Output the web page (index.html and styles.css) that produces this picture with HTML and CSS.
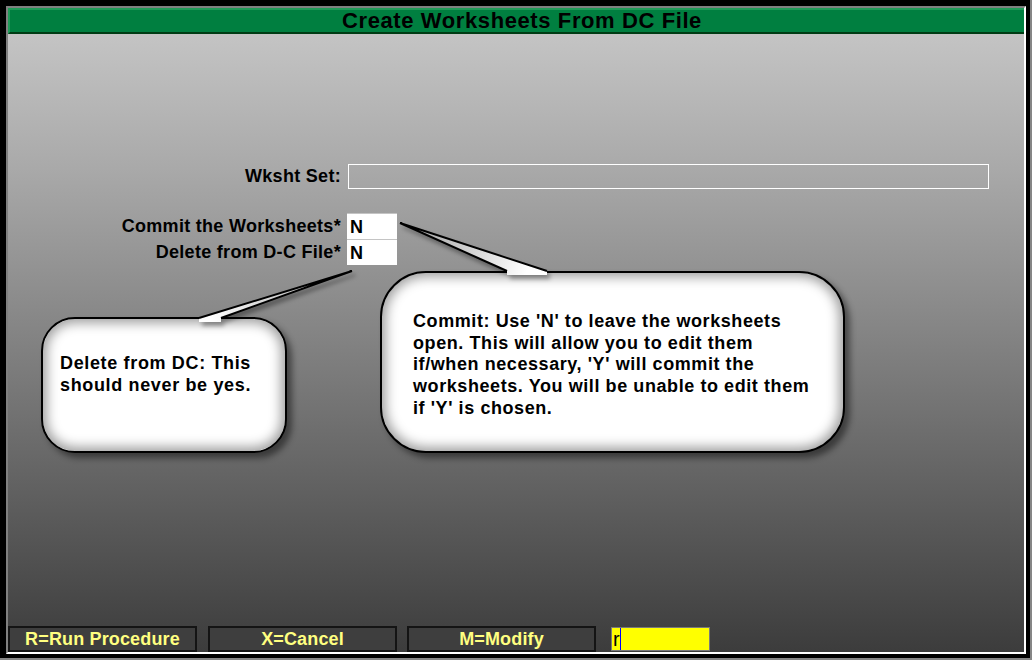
FILE: index.html
```html
<!DOCTYPE html>
<html>
<head>
<meta charset="utf-8">
<link rel="stylesheet" href="styles.css">
</head>
<body>
<div class="window">
  <div class="screen">
    <div class="titlebar">Create Worksheets From DC File</div>
    <div class="main">
      <div class="form">
        <div class="label">Wksht Set:</div>
        <div class="field-wide"></div>
        <div class="spacer"></div>
        <div class="label row1">Commit the Worksheets*</div>
        <div class="yn first">N</div>
        <div class="label">Delete from D-C File*</div>
        <div class="yn">N</div>
      </div>
    </div>
    <div class="buttonbar">
      <div class="btn">R=Run Procedure</div>
      <div class="btn">X=Cancel</div>
      <div class="btn">M=Modify</div>
      <div class="cmd"><span class="cmdtext">r</span><span class="caret"></span></div>
    </div>

    <div class="callout callout-dc">Delete from DC: This<br>should never be yes.</div>
    <div class="callout callout-commit">Commit: Use 'N' to leave the worksheets<br>open. This will allow you to edit them<br>if/when necessary, 'Y' will commit the<br>worksheets. You will be unable to edit them<br>if 'Y' is chosen.</div>

    <svg class="tails" width="1016" height="644" viewBox="0 0 1016 644">
      <defs>
        <filter id="tsh" x="-20%" y="-20%" width="140%" height="160%">
          <feDropShadow dx="3" dy="4" stdDeviation="2" flood-color="#000" flood-opacity="0.35"/>
        </filter>
        <linearGradient id="tg1" x1="344" y1="263" x2="202" y2="310" gradientUnits="userSpaceOnUse">
          <stop offset="0" stop-color="#9a9a9a"/>
          <stop offset="1" stop-color="#ffffff"/>
        </linearGradient>
        <linearGradient id="tg2" x1="392" y1="215" x2="519" y2="263" gradientUnits="userSpaceOnUse">
          <stop offset="0" stop-color="#9a9a9a"/>
          <stop offset="1" stop-color="#ffffff"/>
        </linearGradient>
      </defs>
      <g filter="url(#tsh)">
        <polygon points="344,263 191,310 191,314 213,314 213,310" fill="url(#tg1)"/>
        <polyline points="191,310 344,263 213,310" fill="none" stroke="#000" stroke-width="2" stroke-linejoin="miter"/>
      </g>
      <g filter="url(#tsh)">
        <polygon points="392,215 499,263 499,267 539,267 539,263" fill="url(#tg2)"/>
        <polyline points="499,263 392,215 539,263" fill="none" stroke="#000" stroke-width="2" stroke-linejoin="miter"/>
      </g>
    </svg>
  </div>
</div>
</body>
</html>
```

FILE: styles.css
```css
* { box-sizing: border-box; }

html, body {
  margin: 0;
  padding: 0;
}

body {
  background: #868686;
  width: 1032px;
  height: 660px;
  overflow: hidden;
  font-family: "Liberation Sans", Arial, sans-serif;
  font-weight: bold;
  font-size: 18px;
  letter-spacing: 0.3px;
  color: #000;
}

.window {
  width: 1030px;
  height: 658px;
  background: #000;
  padding: 6px 4px 4px 6px;
}

.screen {
  position: relative;
  width: 100%;
  height: 100%;
  border: 2px solid;
  border-color: #808080 #ffffff #ffffff #808080;
  background: linear-gradient(#c9c9c9 0%, #a9a9a9 25%, #3c3c3c 100%);
  display: flex;
  flex-direction: column;
}

.titlebar {
  height: 26px;
  flex: none;
  background: #007f40;
  border-top: 2px solid #1f9a58;
  border-left: 2px solid #1f9a58;
  border-bottom: 2px solid #003c14;
  padding-left: 10px;
  text-align: center;
  font-size: 22px;
  letter-spacing: 0.6px;
  line-height: 21px;
  color: #000;
}

.main {
  flex: 1;
}

.form {
  margin-top: 130px;
  display: grid;
  grid-template-columns: 333px 1fr;
  column-gap: 6px;
  align-items: center;
}

.label {
  text-align: right;
  line-height: 27px;
  height: 26px;
}

.form > .label:first-child {
  height: 25px;
  line-height: 25px;
}

.field-wide {
  margin-left: 1px;
  width: 641px;
  height: 25px;
  border: 1px solid #ffffff;
}

.spacer {
  grid-column: 1 / span 2;
  height: 24px;
}

.yn {
  width: 50px;
  height: 26px;
  background: #ffffff;
  border-top: 1px solid #c4c4c4;
  padding-left: 3px;
  line-height: 26px;
}

.buttonbar {
  flex: none;
  height: 26px;
  display: flex;
  align-items: stretch;
}

.btn {
  width: 189px;
  height: 26px;
  margin-right: 11px;
  background: #3e3e3e;
  border: 2px solid #141414;
  color: #ffff80;
  text-align: center;
  line-height: 22px;
  letter-spacing: 0.15px;
}

.btn:nth-child(2) {
  margin-right: 10px;
}

.cmd {
  margin-left: 4px;
  margin-top: 1px;
  width: 99px;
  height: 24px;
  background: #ffff00;
  border: 1px solid #7a7a7a;
  display: flex;
  align-items: stretch;
  font-weight: normal;
  font-size: 20px;
  letter-spacing: 0;
  line-height: 22px;
}

.cmdtext {
  padding-left: 1px;
  color: #000;
}

.caret {
  width: 1px;
  background: #0000ff;
}

.callout {
  position: absolute;
  background: #ffffff;
  border: 2px solid #000;
  box-shadow: inset 0 0 12px 4px rgba(0, 0, 0, 0.38), 5px 5px 6px rgba(0, 0, 0, 0.45);
  line-height: 22px;
  white-space: nowrap;
}

.callout-dc {
  left: 33px;
  top: 309px;
  width: 246px;
  height: 136px;
  border-radius: 34px;
  padding: 33px 0 0 17px;
  letter-spacing: 0.65px;
}

.callout-commit {
  left: 372px;
  top: 263px;
  width: 465px;
  height: 182px;
  border-radius: 46px;
  padding: 38px 0 0 31px;
  line-height: 21.7px;
  letter-spacing: 0.58px;
}

.tails {
  position: absolute;
  left: 0;
  top: 0;
  pointer-events: none;
}
```
